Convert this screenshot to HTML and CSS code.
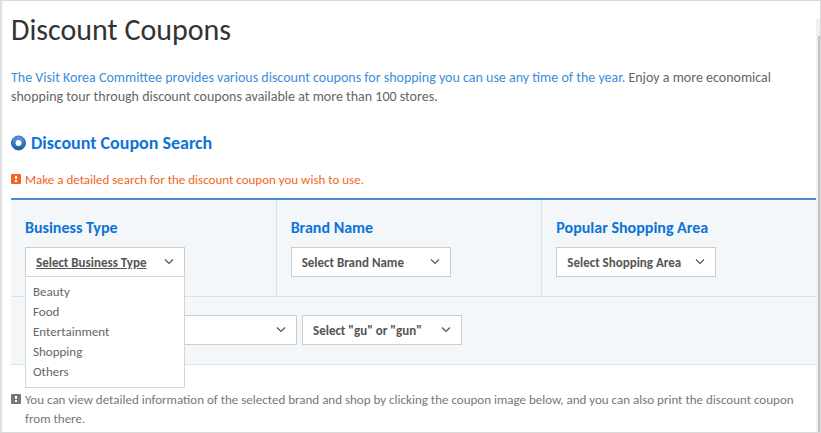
FILE: index.html
```html
<!DOCTYPE html>
<html lang="en">
<head>
    <meta charset="UTF-8">
    <meta name="viewport" content="width=device-width, initial-scale=1.0">
    <title>Discount Coupons</title>
    <link rel="stylesheet" href="styles.css">
</head>
<body>
    <div class="frame">
        <main class="content">
            <h1 class="page-title">Discount Coupons</h1>
            <p class="intro"><span class="highlight">The Visit Korea Committee provides various discount coupons for shopping you can use any time of the year.</span> Enjoy a more economical shopping tour through discount coupons available at more than 100 stores.</p>

            <h2 class="section-title">
                <svg class="ring" viewBox="0 0 16 16" aria-hidden="true">
                    <defs>
                        <linearGradient id="ring-fill" x1="0" y1="0" x2="0" y2="1">
                            <stop offset="0" stop-color="#5b9fe0"/>
                            <stop offset="1" stop-color="#1a5aa6"/>
                        </linearGradient>
                    </defs>
                    <circle cx="7.5" cy="8" r="7" fill="url(#ring-fill)" stroke="#2a68b0"/>
                    <circle cx="7.5" cy="8" r="3" fill="#fff"/>
                </svg>
                Discount Coupon Search
            </h2>

            <p class="note note-alert">
                <svg class="mark" viewBox="0 0 10 10" aria-hidden="true">
                    <rect width="10" height="10" rx="1" fill="currentColor"/>
                    <path d="M4 2h2v3H4zM4 6h2v2H4z" fill="#fff"/>
                </svg>
                <span>Make a detailed search for the discount coupon you wish to use.</span>
            </p>

            <form class="search">
                <div class="columns">
                    <div class="field">
                        <h3 class="field-title" id="type-title">Business Type</h3>
                        <div class="dropdown">
                            <button type="button" class="picker picker-open" id="type-button" aria-expanded="true" aria-controls="type-menu" aria-describedby="type-title">Select Business Type</button>
                            <ul class="menu" id="type-menu">
                                <li><a href="#beauty">Beauty</a></li>
                                <li><a href="#food">Food</a></li>
                                <li><a href="#entertainment">Entertainment</a></li>
                                <li><a href="#shopping">Shopping</a></li>
                                <li><a href="#others">Others</a></li>
                            </ul>
                        </div>
                    </div>
                    <div class="field">
                        <label class="field-title" for="brand">Brand Name</label>
                        <select class="picker" id="brand">
                            <option>Select Brand Name</option>
                        </select>
                    </div>
                    <div class="field">
                        <label class="field-title" for="area">Popular Shopping Area</label>
                        <select class="picker" id="area">
                            <option>Select Shopping Area</option>
                        </select>
                    </div>
                </div>
                <div class="region">
                    <select class="picker" aria-label="City">
                        <option></option>
                    </select>
                    <select class="picker" aria-label="District">
                        <option>Select "gu" or "gun"</option>
                    </select>
                </div>
            </form>

            <p class="note">
                <svg class="mark" viewBox="0 0 10 10" aria-hidden="true">
                    <rect width="10" height="10" rx="1" fill="currentColor"/>
                    <path d="M4 2h2v3H4zM4 6h2v2H4z" fill="#fff"/>
                </svg>
                <span>You can view detailed information of the selected brand and shop by clicking the coupon image below, and you can also print the discount coupon from there.</span>
            </p>
        </main>
        <div class="scrollbar"><div class="thumb"></div></div>
    </div>

    <script>
        // Open and close the business type menu
        const button = document.getElementById('type-button');
        const menu = document.getElementById('type-menu');

        button.addEventListener('click', function () {
            menu.hidden = !menu.hidden;
            button.setAttribute('aria-expanded', String(!menu.hidden));
        });
    </script>
</body>
</html>
```

FILE: styles.css
```css
* {
    box-sizing: border-box;
}

body {
    margin: 0;
    font-family: Calibri, Carlito, Lato, sans-serif;
    font-size: 13px;
    line-height: 20px;
    color: #666;
    background: #fff;
}

h1, h2, h3, p, ul {
    margin: 0;
    padding: 0;
}

.frame {
    display: flex;
    min-height: 100vh;
    border: 1px solid #d9d9d9;
}

.content {
    flex: 1;
    border-left: 2px solid #eee;
    padding: 10px 0 0 8px;
}

.page-title {
    font-size: 30px;
    font-weight: 400;
    line-height: 38px;
    color: #333;
}

.intro {
    margin-top: 19px;
    padding-right: 32px;
    font-size: 14px;
    line-height: 19px;
}

.highlight {
    color: #3b8edb;
}

.section-title {
    display: flex;
    align-items: center;
    gap: 4px;
    margin-top: 27px;
    font-size: 18px;
    color: #0e73d6;
}

.ring {
    width: 16px;
    height: 16px;
}

.note {
    display: flex;
    gap: 4px;
    margin-top: 25px;
    padding-right: 16px;
    line-height: 19px;
    color: #777;
}

.note-alert {
    margin-top: 17px;
    color: #f26522;
}

.mark {
    flex: none;
    width: 10px;
    height: 10px;
    margin-top: 4px;
}

.search {
    margin-top: 9px;
    border-top: 2px solid #4a8dcf;
    border-bottom: 1px solid #d2e6ec;
    background: #f3f7fa;
}

.columns {
    display: grid;
    grid-template-columns: 33fr 33fr 34fr;
    border-bottom: 1px solid #d2e6ec;
}

.field {
    padding: 18px 14px 19px;
    border-right: 1px solid #d2e6ec;
}

.field:last-child {
    border-right: 0;
}

.field-title {
    display: block;
    margin-bottom: 9px;
    font-size: 16px;
    font-weight: 700;
    color: #0e73d6;
}

.dropdown {
    position: relative;
    width: 160px;
}

.picker {
    display: block;
    width: 160px;
    height: 30px;
    padding: 0 24px 0 10px;
    border: 1px solid #ccc;
    border-radius: 0;
    appearance: none;
    background: #fff url("data:image/svg+xml,%3Csvg xmlns='http://www.w3.org/2000/svg' width='10' height='6'%3E%3Cpath d='M1 .5l4 4 4-4' fill='none' stroke='%23555' stroke-width='1.2'/%3E%3C/svg%3E") no-repeat right 10px center;
    font-family: inherit;
    font-size: 13px;
    font-weight: 700;
    text-align: left;
    white-space: nowrap;
    color: #555;
}

.picker-open {
    text-decoration: underline;
}

.menu {
    position: absolute;
    top: 29px;
    left: 0;
    z-index: 1;
    width: 100%;
    padding: 5px 7px;
    border: 1px solid #d5d5d5;
    background: #fff;
    list-style: none;
}

.menu a {
    color: #666;
    text-decoration: none;
}

.region {
    display: flex;
    gap: 5px;
    padding: 18px 14px 19px 126px;
}

.scrollbar {
    width: 4px;
    margin-top: 18px;
    padding: 17px 0 0 2px;
    background: #f0f0f0;
}

.thumb {
    height: 100%;
    background: #c1c1c1;
}
```
